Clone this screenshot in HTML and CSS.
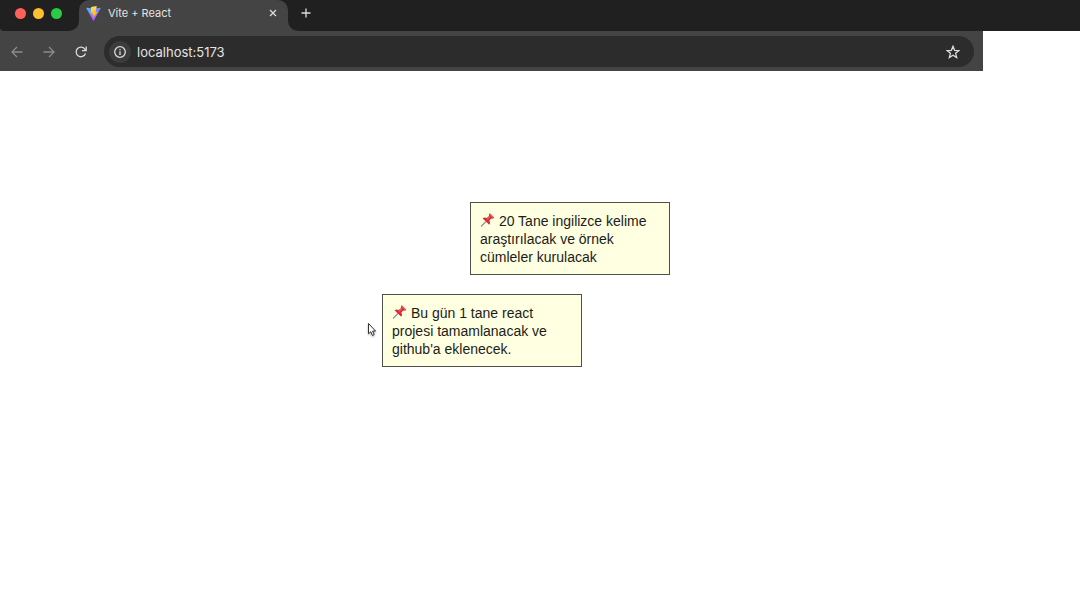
FILE: index.html
```
<!DOCTYPE html>
<html lang="tr">
<head>
<meta charset="utf-8">
<title>Vite + React</title>
<link rel="stylesheet" href="styles.css">
</head>
<body>
<header class="browser">
  <div class="tab-strip">
    <div class="window-controls">
      <button class="light light-close" aria-label="Close window"></button>
      <button class="light light-minimize" aria-label="Minimize window"></button>
      <button class="light light-zoom" aria-label="Zoom window"></button>
    </div>
    <div class="tab-slot">
      <div class="tab">
        <svg class="favicon" viewBox="0 0 32 32" aria-hidden="true">
          <defs>
            <linearGradient id="body" x1="0" y1="0" x2="0.6" y2="1"><stop offset="0" stop-color="#41c4ff"/><stop offset="1" stop-color="#bd44fe"/></linearGradient>
            <linearGradient id="bolt" x1="0.4" y1="0" x2="0.6" y2="1"><stop offset="0" stop-color="#ffe45e"/><stop offset="1" stop-color="#ffa800"/></linearGradient>
          </defs>
          <path fill="url(#body)" d="M31 5.500 17 31q-1 1.500-2 0L1 5.500Q.3 3.500 2 3.500L16 6 30 3.500q1.700 0 1 2z"/>
          <path fill="url(#bolt)" d="M23 0 11 2l-1 14 4.500-.8-1 5 3-.8-1.500 7L25 12.500l-4.500.8z"/>
        </svg>
        <span class="tab-title">Vite + React</span>
        <button class="icon-button tab-close" aria-label="Close tab">
          <svg viewBox="0 0 8 8" width="8" height="8"><path d="M1 1l6 6M7 1 1 7"/></svg>
        </button>
      </div>
    </div>
    <div class="strip-rest">
      <button class="icon-button" aria-label="New tab">
        <svg viewBox="0 0 10 10" width="10" height="10"><path d="M5 .5v9M.5 5h9"/></svg>
      </button>
    </div>
  </div>
  <div class="toolbar">
    <nav class="navigation">
      <button class="icon-button dim" aria-label="Back">
        <svg viewBox="0 0 12 12" width="12" height="12"><path d="M11.500 6H1M6 1 1 6l5 5"/></svg>
      </button>
      <button class="icon-button dim" aria-label="Forward">
        <svg viewBox="0 0 12 12" width="12" height="12"><path d="M.5 6H11M6 1l5 5-5 5"/></svg>
      </button>
      <button class="icon-button" aria-label="Reload">
        <svg viewBox="0 0 12 12" width="12" height="12"><path d="M10.500 7.500A4.800 4.800 0 1 1 10 3.300L11 4.500M11.200.5v4.200H7"/></svg>
      </button>
    </nav>
    <div class="address">
      <button class="icon-button site-info" aria-label="Site information">
        <svg viewBox="0 0 12 12" width="12" height="12"><circle cx="6" cy="6" r="5.300"/><path d="M6 5.200V9M6 3v1.300"/></svg>
      </button>
      <input class="url" type="text" aria-label="Address" value="localhost:5173">
      <button class="icon-button" aria-label="Bookmark">
        <svg viewBox="0 0 14 14" width="14" height="14"><path d="M7 1.300l1.600 4 4.300.3-3.300 2.700 1.100 4.200L7 10.200l-3.700 2.300 1.100-4.200L1.100 5.600l4.300-.3z"/></svg>
      </button>
    </div>
  </div>
</header>
<main class="board">
  <svg class="pin-source" aria-hidden="true">
    <symbol id="pin" viewBox="0 0 14 14">
      <path d="M.5 13.500 5.500 8.500" stroke="#8c8f94" stroke-width="1.100"/>
      <path fill="#d22f38" d="M2 5.200q2.300-1.400 4.300-.2l2.200-1.900Q7.900 1.300 9.300.2l4.500 4.500q-1.300 1.300-3 .8L8.900 7.600q1.300 2.100-.2 4.200z"/>
      <path fill="#ee6467" d="M9.500.5l4 4-1.200.4L9 1.600zM6 6l3-2.700.9.800-3 2.700z"/>
    </symbol>
  </svg>
  <article class="note note-words"><svg class="pin" aria-hidden="true"><use href="#pin"/></svg> 20 Tane ingilizce kelime araştırılacak ve örnek cümleler kurulacak</article>
  <article class="note note-project"><svg class="pin" aria-hidden="true"><use href="#pin"/></svg> Bu gün 1 tane react projesi tamamlanacak ve github'a eklenecek.</article>
  <svg class="pointer" viewBox="0 0 10 16" aria-hidden="true"><path d="M1.500 1.500v10.200l2.300-2 1.700 3.800 1.700-.8-1.600-3.600h3z" fill="#fff" stroke="#333" stroke-width="1"/></svg>
</main>
</body>
</html>
```
FILE: styles.css
```
* {
  box-sizing: border-box;
}

body {
  margin: 0;
  min-height: 100vh;
  display: flex;
  flex-direction: column;
  background: #fff;
  font-family: "Liberation Sans", Arial, sans-serif;
}

.browser {
  font-family: Inter, sans-serif;
  color: #e3e3e3;
}

.tab-strip {
  display: flex;
  height: 31px;
  background: #444;
}

.window-controls {
  display: flex;
  align-items: center;
  gap: 7px;
  width: 79px;
  padding: 0 0 5px 15px;
  background: #202020;
  border-radius: 0 0 10px 4px;
}

.light {
  width: 11px;
  height: 11px;
  padding: 0;
  border: 0;
  border-radius: 50%;
}

.light-close {
  background: #ff6159;
}

.light-minimize {
  background: #fdc130;
}

.light-zoom {
  background: #2bcb43;
}

.tab-slot {
  width: 209px;
  background: linear-gradient(#202020 50%, #444 50%);
}

.tab {
  display: flex;
  align-items: center;
  height: 100%;
  padding: 0 8px 5px 7px;
  background: #444;
  border-radius: 10px 10px 0 0;
}

.favicon {
  width: 15px;
  height: 15px;
}

.tab-title {
  flex: 1;
  margin-left: 7px;
  font-size: 11px;
  line-height: 16px;
}

.icon-button {
  display: flex;
  align-items: center;
  justify-content: center;
  padding: 0;
  border: 0;
  background: none;
  color: #dcdcdc;
}

.icon-button svg {
  fill: none;
  stroke: currentColor;
  stroke-width: 1.3;
}

.dim {
  color: #8b8b88;
}

.tab-close {
  width: 14px;
  height: 14px;
}

.strip-rest {
  flex: 1;
  display: flex;
  align-items: center;
  padding: 0 13px 5px;
  background: #202020;
  border-radius: 0 0 0 10px;
}

.toolbar {
  display: flex;
  align-items: center;
  gap: 17px;
  height: 40px;
  margin-right: 97px;
  padding: 1px 9px 0 11px;
  background: #444;
}

.navigation {
  display: flex;
  gap: 20px;
}

.address {
  flex: 1;
  display: flex;
  align-items: center;
  height: 31px;
  padding: 0 14px 0 5px;
  background: #2c2c2c;
  border-radius: 16px;
}

.site-info {
  width: 22px;
  height: 22px;
  border-radius: 50%;
  background: #3c3c3c;
}

.url {
  flex: 1;
  min-width: 0;
  margin-left: 6px;
  padding: 0;
  border: 0;
  outline: 0;
  background: none;
  color: inherit;
  font: 13px/16px Inter, sans-serif;
}

.board {
  position: relative;
  flex: 1;
}

.note {
  position: absolute;
  width: 200px;
  padding: 9px 9px 8px;
  border: 1px solid #50504a;
  background: #ffffe2;
  color: #1c1c18;
  font-size: 14px;
  line-height: 18px;
}

.note-words {
  left: 470px;
  top: 131px;
}

.note-project {
  left: 382px;
  top: 223px;
}

.pin-source {
  position: absolute;
  width: 0;
  height: 0;
}

.pin {
  width: 15px;
  height: 14px;
  vertical-align: -1px;
}

.pointer {
  position: absolute;
  left: 367px;
  top: 251px;
  width: 10px;
  height: 16px;
  filter: drop-shadow(0 1px 1px rgb(0 0 0 / 30%));
}
```
